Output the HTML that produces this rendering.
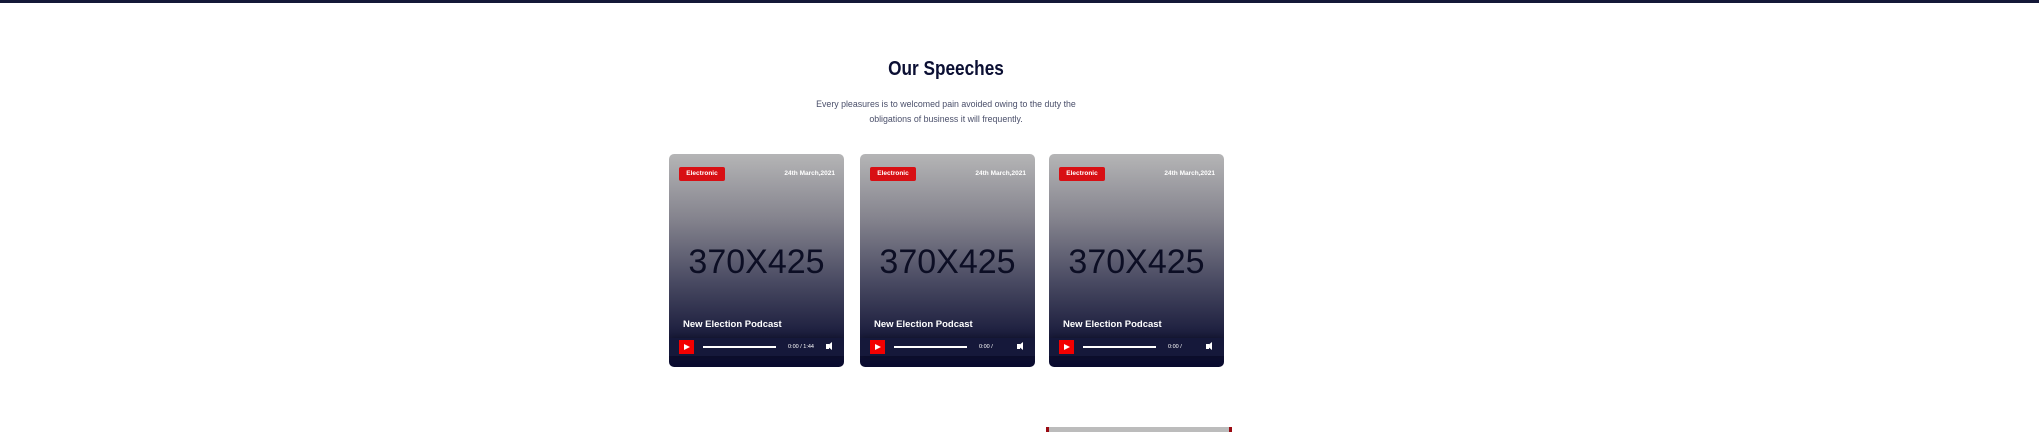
<!DOCTYPE html>
<html><head><style>
*{margin:0;padding:0;box-sizing:border-box}
body{width:2039px;height:432px;background:#fff;position:relative;overflow:hidden;font-family:"Liberation Sans",sans-serif}
.top{position:absolute;left:0;top:0;width:2039px;height:3px;background:#141838}
h2{position:absolute;left:746px;width:400px;top:58px;line-height:22px;text-align:center;font-weight:bold;font-size:20px;color:#0b0f33;transform:scaleX(0.86)}
p.sub{position:absolute;left:746px;width:400px;top:97px;text-align:center;font-size:8.8px;line-height:15px;color:#4a4f6a}
.card{position:absolute;top:154px;width:175px;height:213px;border-radius:5px;overflow:hidden;background:linear-gradient(#b5b5b6 0%,#85848e 30%,#494a62 60%,#1b1d3d 85%,#080a2e 100%)}
.badge{position:absolute;left:10px;top:13px;width:46px;height:14px;background:#d80f14;border-radius:2px;color:#fff;font-size:6.5px;font-weight:bold;text-align:center;line-height:14px}
.date{position:absolute;right:9px;top:16px;color:#fff;font-size:6.5px;font-weight:bold}
.ph{position:absolute;left:0;width:100%;top:89px;text-align:center;font-size:34px;color:#0c0e24}
.title{position:absolute;left:14px;top:165px;color:#fff;font-size:9.5px;font-weight:bold}
.bar{position:absolute;left:0;top:184px;width:100%;height:18px;background:#15183a;box-shadow:0 0 8px rgba(0,0,0,.4)}
.play{position:absolute;left:10px;top:2px;width:15px;height:14px;background:#f20000}
.play:after{content:"";position:absolute;left:5px;top:4px;border-left:6px solid #fff;border-top:3px solid transparent;border-bottom:3px solid transparent}
.line{position:absolute;left:34px;top:8px;width:73px;height:2px;background:#fff}
.time{position:absolute;left:119px;top:6px;color:#fff;font-size:5.5px}
.vol{position:absolute;left:157px;top:6px;width:3px;height:5px;background:#fff}
.vol:before{content:"";position:absolute;left:1px;top:-2px;border-right:5px solid #fff;border-top:4.5px solid transparent;border-bottom:4.5px solid transparent}
.bot{position:absolute;left:1046px;top:427px;width:186px;height:5px;background:#bcbcbc;border-left:3px solid #9a0a12;border-right:3px solid #9a0a12}
</style></head><body>
<div class="top"></div>
<h2>Our Speeches</h2>
<p class="sub">Every pleasures is to welcomed pain avoided owing to the duty the<br>obligations of business it will frequently.</p>
<div class="card" style="left:669px"><div class="badge">Electronic</div><div class="date">24th March,2021</div><div class="ph">370X425</div><div class="title">New Election Podcast</div><div class="bar"><div class="play"></div><div class="line"></div><div class="time">0:00 / 1:44</div><div class="vol"></div></div></div>
<div class="card" style="left:860px"><div class="badge">Electronic</div><div class="date">24th March,2021</div><div class="ph">370X425</div><div class="title">New Election Podcast</div><div class="bar"><div class="play"></div><div class="line"></div><div class="time">0:00 /</div><div class="vol"></div></div></div>
<div class="card" style="left:1049px"><div class="badge">Electronic</div><div class="date">24th March,2021</div><div class="ph">370X425</div><div class="title">New Election Podcast</div><div class="bar"><div class="play"></div><div class="line"></div><div class="time">0:00 /</div><div class="vol"></div></div></div>
<div class="bot"></div>
</body></html>
